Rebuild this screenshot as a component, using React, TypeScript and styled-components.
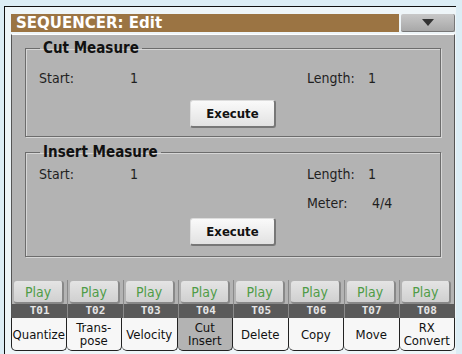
import React from "react";
import styled, { createGlobalStyle } from "styled-components";

const Global = createGlobalStyle`
  html, body { margin: 0; padding: 0; background: #dcedf5; }
  body { font-family: "DejaVu Sans Condensed", "DejaVu Sans", sans-serif; width: 462px; height: 354px; overflow: hidden; }
`;

const Frame = styled.div`
  margin: 6px 0 0 4px;
  width: 452px;
  height: 348px;
  border-top: 1px solid #111;
  border-left: 1px solid #111;
  background: #eef5f8;
  padding: 7px 0 0 6px;
  box-sizing: border-box;
`;

const TitleRow = styled.div`
  display: flex;
  gap: 2px;
  height: 18px;
  width: 444px;
`;

const Title = styled.div`
  flex: 1;
  background: #9b7443;
  color: #fff;
  font-family: "DejaVu Sans", sans-serif;
  font-weight: bold;
  font-size: 15px;
  line-height: 18px;
  padding-left: 5px;
  letter-spacing: 0px;
`;

const DropButton = styled.div`
  width: 54px;
  background: linear-gradient(#c8c8c8, #a8a8a8);
  border-radius: 2px;
  border-right: 1px solid #777;
  border-bottom: 1px solid #777;
  display: flex;
  align-items: center;
  justify-content: center;
  box-sizing: border-box;
`;

const Panel = styled.div`
  margin-top: 2px;
  width: 444px;
  background: #b3b3b3;
  border-left: 1px solid #555;
  border-right: 1px solid #555;
  border-top: 1px solid #fff;
  box-sizing: border-box;
  padding-top: 6px;
  display: flex;
  flex-direction: column;
`;

const Group = styled.fieldset<{ $h: number }>`
  margin: 0 13px 0 13px;
  padding: 0 0 0 13px;
  border: 1px solid #6c6c6c;
  box-shadow: 1px 1px 0 #d6d6d6, inset 1px 1px 0 #d6d6d6;
  height: ${(p) => p.$h}px;
  box-sizing: border-box;
  display: flex;
  flex-direction: column;
  & + & { margin-top: 8px; }
`;

const Legend = styled.legend`
  font-weight: bold;
  font-size: 15px;
  padding: 0 3px;
  margin-left: 1px;
  color: #111;
  line-height: 14px;
`;

const Row = styled.div<{ $mt?: number }>`
  display: grid;
  grid-template-columns: 91px 177px 61px auto;
  font-size: 14px;
  color: #1f1f1f;
  height: 29px;
  align-items: center;
  margin-top: ${(p) => p.$mt ?? 0}px;
`;

const Cell = styled.span``;

const ExecRow = styled.div<{ $mt: number }>`
  display: flex;
  justify-content: center;
  padding-right: 13px;
  margin-top: ${(p) => p.$mt}px;
`;

const Execute = styled.div`
  width: 86px;
  height: 28px;
  box-sizing: border-box;
  background: linear-gradient(#fafafa, #e2e2e2);
  border-radius: 3px;
  border-right: 2px solid #777;
  border-bottom: 2px solid #777;
  border-top: 1px solid #ddd;
  border-left: 1px solid #ddd;
  font-weight: bold;
  font-size: 13px;
  display: flex;
  align-items: center;
  justify-content: center;
  color: #111;
`;

const Tracks = styled.div`
  margin-top: 23px;
  display: grid;
  grid-template-columns: repeat(8, 1fr);
`;

const Track = styled.div`
  display: flex;
  flex-direction: column;
  border-left: 1px solid #8a8a8a;
  &:first-child { border-left: none; }
`;

const PlayWrap = styled.div`
  padding: 1px 3px 0 2px;
  height: 24px;
  box-sizing: border-box;
`;

const Play = styled.div`
  height: 23px;
  box-sizing: border-box;
  background: linear-gradient(#e4e4e4, #d0d0d0);
  border-radius: 3px;
  border-right: 2px solid #888;
  border-bottom: 2px solid #888;
  color: #4f9c47;
  font-size: 14px;
  display: flex;
  align-items: center;
  justify-content: center;
`;

const TLabel = styled.div`
  background: #5a5a5a;
  color: #e6e6e6;
  font-size: 11px;
  font-weight: bold;
  height: 14px;
  line-height: 14px;
  text-align: center;
  font-family: "DejaVu Sans Mono", monospace;
`;

const TabRow = styled.div`
  display: grid;
  grid-template-columns: repeat(8, 1fr);
  width: 444px;
`;

const Tab = styled.div<{ $sel?: boolean }>`
  height: 33px;
  box-sizing: border-box;
  background: ${(p) => (p.$sel ? "#b3b3b3" : "#f7f7f7")};
  border: 1px solid #222;
  border-top: none;
  border-left: none;
  border-radius: 0 0 5px 5px;
  font-size: 13px;
  line-height: 13px;
  color: #111;
  display: flex;
  align-items: center;
  justify-content: center;
  text-align: center;
  white-space: pre-line;
  &:first-child { border-left: 1px solid #222; }
`;

const tabs = ["Quantize", "Trans-\npose", "Velocity", "Cut\nInsert", "Delete", "Copy", "Move", "RX\nConvert"];

export default function App() {
  return (
    <>
      <Global />
      <Frame>
        <TitleRow>
          <Title>SEQUENCER: Edit</Title>
          <DropButton>
            <svg width="12" height="7" viewBox="0 0 12 7">
              <polygon points="0,0 12,0 6,7" fill="#333" />
            </svg>
          </DropButton>
        </TitleRow>
        <Panel>
          <Group $h={96}>
            <Legend>Cut Measure</Legend>
            <Row $mt={8}>
              <Cell>Start:</Cell>
              <Cell>1</Cell>
              <Cell>Length:</Cell>
              <Cell>1</Cell>
            </Row>
            <ExecRow $mt={8}>
              <Execute>Execute</Execute>
            </ExecRow>
          </Group>
          <Group $h={112}>
            <Legend>Insert Measure</Legend>
            <Row>
              <Cell>Start:</Cell>
              <Cell>1</Cell>
              <Cell>Length:</Cell>
              <Cell>1</Cell>
            </Row>
            <Row>
              <Cell />
              <Cell />
              <Cell>Meter:</Cell>
              <Cell>&nbsp;4/4</Cell>
            </Row>
            <ExecRow $mt={1}>
              <Execute>Execute</Execute>
            </ExecRow>
          </Group>
          <Tracks>
            {tabs.map((_, i) => (
              <Track key={i}>
                <PlayWrap>
                  <Play>Play</Play>
                </PlayWrap>
                <TLabel>T0{i + 1}</TLabel>
              </Track>
            ))}
          </Tracks>
        </Panel>
        <TabRow>
          {tabs.map((t, i) => (
            <Tab key={i} $sel={i === 3}>{t}</Tab>
          ))}
        </TabRow>
      </Frame>
    </>
  );
}
